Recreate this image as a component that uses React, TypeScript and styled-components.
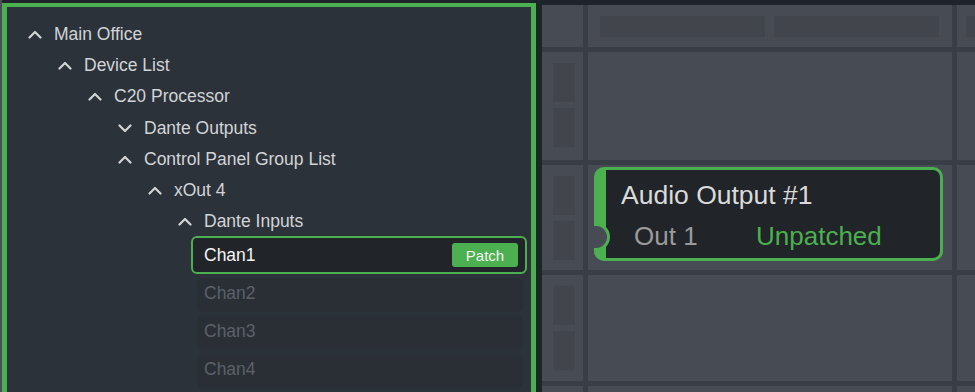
import styled, { createGlobalStyle } from "styled-components";

const GlobalStyle = createGlobalStyle`
  html, body {
    margin: 0;
    padding: 0;
    background: #1f242b;
    overflow: hidden;
  }
  body {
    font-family: "Liberation Sans", Arial, sans-serif;
  }
`;

const Screen = styled.div`
  display: flex;
  width: 975px;
  height: 392px;
  overflow: hidden;
  background: #1f242b;
`;

const Edge = styled.div`
  width: 2px;
  flex-shrink: 0;
  background: #4a4f56;
`;

const TreePanel = styled.div`
  flex-shrink: 0;
  box-sizing: border-box;
  width: 534px;
  height: 400px;
  margin-top: 3px;
  padding: 12px 0 0 21px;
  background: #2c323a;
  border: 5px solid #4caf50;
  border-top-width: 4px;
  border-bottom: none;
`;

const TreeRow = styled.div<{ $level: number }>`
  display: flex;
  align-items: center;
  gap: 12px;
  height: 31.2px;
  padding-left: ${(p) => p.$level * 30}px;
  color: #d2d4d6;
  font-size: 17.5px;
  white-space: nowrap;
`;

const ChanList = styled.div`
  display: flex;
  flex-direction: column;
  gap: 4px;
  width: 326px;
  margin-left: 169px;
  margin-top: -1px;
`;

const ChanRow = styled.div<{ $active?: boolean }>`
  display: flex;
  align-items: center;
  justify-content: space-between;
  box-sizing: border-box;
  height: ${(p) => (p.$active ? 38 : 34)}px;
  margin: ${(p) => (p.$active ? "0 -4px 0 -6px" : "0")};
  padding: ${(p) => (p.$active ? "0 7px 0 11px" : "0 7px 3px 7px")};
  border: ${(p) => (p.$active ? "2px solid #4caf50" : "none")};
  border-radius: 6px;
  background: ${(p) => (p.$active ? "#212428" : "#2a2f36")};
  color: ${(p) => (p.$active ? "#f4f4f4" : "#5b6169")};
  font-size: 17.5px;
`;

const PatchButton = styled.button`
  width: 66px;
  height: 24px;
  padding: 0;
  border: none;
  border-radius: 3px;
  background: #4caf50;
  color: #f2f5f2;
  font-family: "Liberation Sans", Arial, sans-serif;
  font-size: 15px;
`;

const Gap = styled.div`
  width: 6px;
  flex-shrink: 0;
`;

const Grid = styled.div`
  display: grid;
  flex: 1;
  grid-template-columns: 41px 364px 1fr;
  grid-template-rows: 42px 108px 105px 106px 1fr;
  gap: 5px;
  margin-top: 5px;
  background: #393e46;
`;

const Cell = styled.div`
  background: #474b53;
`;

const HeaderCell = styled(Cell)<{ $pad?: number }>`
  display: flex;
  gap: 9px;
  padding: 11px 0 10px ${(p) => p.$pad ?? 12}px;
  overflow: hidden;
  min-width: 0;
`;

const HeaderBlock = styled.div`
  flex: 0 0 165px;
  background: #42464c;
`;

const SideCell = styled(Cell)`
  display: flex;
  flex-direction: column;
  gap: 6px;
  padding: 11px 0 0 11px;
`;

const SideBlock = styled.div`
  width: 22px;
  height: 39px;
  background: #42464c;
`;

const NodeCell = styled(Cell)`
  padding: 2px 9px 10px 6px;
`;

const NodeCard = styled.div`
  position: relative;
  box-sizing: border-box;
  height: 94px;
  padding: 10px 0 0 15px;
  background: #212428;
  border: 3px solid #4caf50;
  border-left-width: 12px;
  border-radius: 10px;

  &::before {
    content: "";
    position: absolute;
    left: -12px;
    top: 53px;
    width: 13px;
    height: 22px;
    background: #474b53;
    border: 3px solid #4caf50;
    border-left: none;
    border-radius: 0 14px 14px 0;
  }
`;

const NodeTitle = styled.div`
  height: 30px;
  line-height: 30px;
  color: #dadada;
  font-size: 26.5px;
  white-space: nowrap;
`;

const NodePort = styled.div`
  display: flex;
  margin-top: 11px;
  padding-left: 13px;
  line-height: 30px;
  font-size: 26px;
  white-space: nowrap;
`;

const PortName = styled.span`
  width: 122px;
  color: #9b9b9b;
`;

const PortState = styled.span`
  color: #4caf50;
`;

const Chevron = ({ down }: { down?: boolean }) => (
  <svg width="14" height="9" viewBox="0 0 14 9" fill="none">
    <polyline
      points={down ? "1.5,1.5 7,7 12.5,1.5" : "1.5,7.5 7,2 12.5,7.5"}
      stroke="#d2d4d6"
      strokeWidth="2.2"
      strokeLinecap="round"
      strokeLinejoin="round"
    />
  </svg>
);

const tree = [
  { label: "Main Office", level: 0 },
  { label: "Device List", level: 1 },
  { label: "C20 Processor", level: 2 },
  { label: "Dante Outputs", level: 3, down: true },
  { label: "Control Panel Group List", level: 3 },
  { label: "xOut 4", level: 4 },
  { label: "Dante Inputs", level: 5 },
];

const SideCol = () => (
  <SideCell>
    <SideBlock />
    <SideBlock />
  </SideCell>
);

const App = () => {
  return (
    <Screen>
      <GlobalStyle />
      <Edge />
      <TreePanel>
        {tree.map((t) => (
          <TreeRow key={t.label} $level={t.level}>
            <Chevron down={t.down} />
            {t.label}
          </TreeRow>
        ))}
        <ChanList>
          <ChanRow $active>
            Chan1
            <PatchButton>Patch</PatchButton>
          </ChanRow>
          <ChanRow>Chan2</ChanRow>
          <ChanRow>Chan3</ChanRow>
          <ChanRow>Chan4</ChanRow>
        </ChanList>
      </TreePanel>
      <Gap />
      <Grid>
        <Cell />
        <HeaderCell>
          <HeaderBlock />
          <HeaderBlock />
        </HeaderCell>
        <HeaderCell $pad={9}>
          <HeaderBlock />
        </HeaderCell>

        <SideCol />
        <Cell />
        <Cell />

        <SideCol />
        <NodeCell>
          <NodeCard>
            <NodeTitle>Audio Output #1</NodeTitle>
            <NodePort>
              <PortName>Out 1</PortName>
              <PortState>Unpatched</PortState>
            </NodePort>
          </NodeCard>
        </NodeCell>
        <Cell />

        <SideCol />
        <Cell />
        <Cell />

        <Cell />
        <Cell />
        <Cell />
      </Grid>
    </Screen>
  );
};

export default App;
